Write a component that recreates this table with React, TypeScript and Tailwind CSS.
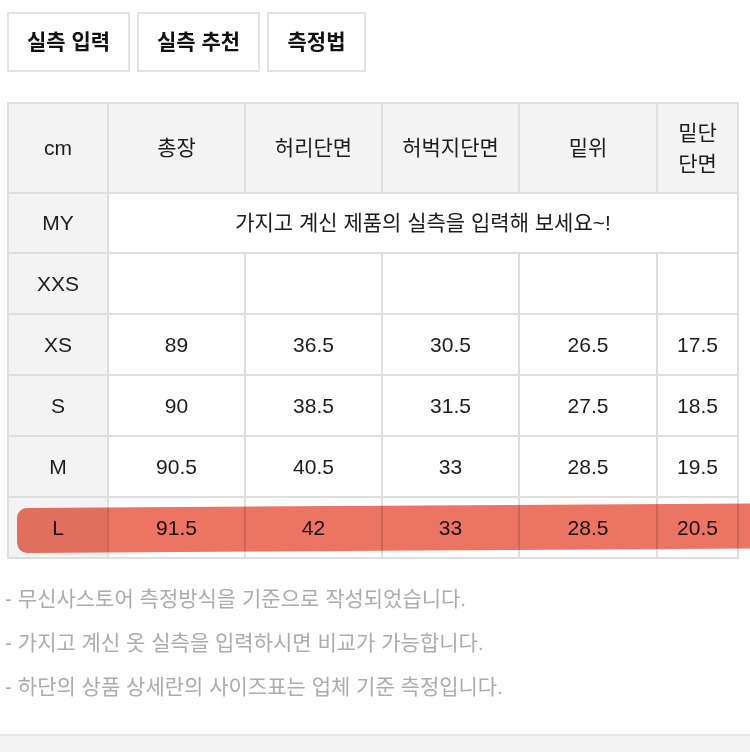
import React from 'react';

const headers = ['cm', '총장', '허리단면', '허벅지단면', '밑위'];
const colWidths = ['w-[100px]', 'w-[137px]', 'w-[137px]', 'w-[137px]', 'w-[138px]', 'w-[81px]'];

const rows: { size: string; values: string[] }[] = [
  { size: 'XXS', values: ['', '', '', '', ''] },
  { size: 'XS', values: ['89', '36.5', '30.5', '26.5', '17.5'] },
  { size: 'S', values: ['90', '38.5', '31.5', '27.5', '18.5'] },
  { size: 'M', values: ['90.5', '40.5', '33', '28.5', '19.5'] },
  { size: 'L', values: ['91.5', '42', '33', '28.5', '20.5'] },
];

const notes = [
  '- 무신사스토어 측정방식을 기준으로 작성되었습니다.',
  '- 가지고 계신 옷 실측을 입력하시면 비교가 가능합니다.',
  '- 하단의 상품 상세란의 사이즈표는 업체 기준 측정입니다.',
];

const cell = 'border-2 border-[#dedede] text-center align-middle p-0';

const App: React.FC = () => {
  return (
    <div
      className="relative w-[750px] h-[752px] overflow-hidden bg-white text-[#1c1c1c]"
      style={{ fontFamily: '"Liberation Sans", "Noto Sans CJK KR", sans-serif' }}
    >
      {/* Tabs */}
      <div className="flex gap-[7px] px-[7px] pt-[12px]">
        {['실측 입력', '실측 추천', '측정법'].map((label, i) => (
          <button
            key={label}
            className={`h-[60px] ${i === 2 ? 'w-[99px]' : 'w-[123px]'} border-2 border-[#e2e2e2] bg-white text-[21px] font-bold text-[#111]`}
          >
            {label}
          </button>
        ))}
      </div>

      {/* Size table */}
      <table className="mt-[30px] ml-[7px] w-[730px] border-collapse table-fixed text-[21px]">
        <colgroup>
          {colWidths.map((w, i) => (
            <col key={i} className={w} />
          ))}
        </colgroup>
        <thead>
          <tr className="h-[90px] bg-[#f3f3f3]">
            {headers.map((h) => (
              <th key={h} className={`${cell} font-normal`}>
                {h}
              </th>
            ))}
            <th className={`${cell} font-normal leading-[31px]`}>
              밑단
              <br />
              단면
            </th>
          </tr>
        </thead>
        <tbody>
          <tr className="h-[60px]">
            <td className={`${cell} bg-[#f3f3f3]`}>MY</td>
            <td className={cell} colSpan={5}>
              가지고 계신 제품의 실측을 입력해 보세요~!
            </td>
          </tr>
          {rows.map((row) => (
            <tr key={row.size} className="h-[61px]">
              <td className={`${cell} bg-[#f3f3f3]`}>{row.size}</td>
              {row.values.map((v, i) => (
                <td key={i} className={cell}>
                  {v}
                </td>
              ))}
            </tr>
          ))}
        </tbody>
      </table>

      {/* Highlighter stroke over the L row */}
      <div className="absolute left-[17px] top-[508px] w-[745px] h-[45px] bg-[#ec7462] mix-blend-multiply rounded-l-[10px] rotate-[-0.35deg] origin-left" />

      {/* Notes */}
      <div className="mt-[18px] pl-[5px] text-[21px] leading-[44px] text-[#acacac]">
        {notes.map((n) => (
          <p key={n}>{n}</p>
        ))}
      </div>

      {/* Bottom band */}
      <div className="mt-[25px] h-[30px] border-t-2 border-[#e6e6e6] bg-[#f4f4f4]" />
    </div>
  );
};

export default App;
